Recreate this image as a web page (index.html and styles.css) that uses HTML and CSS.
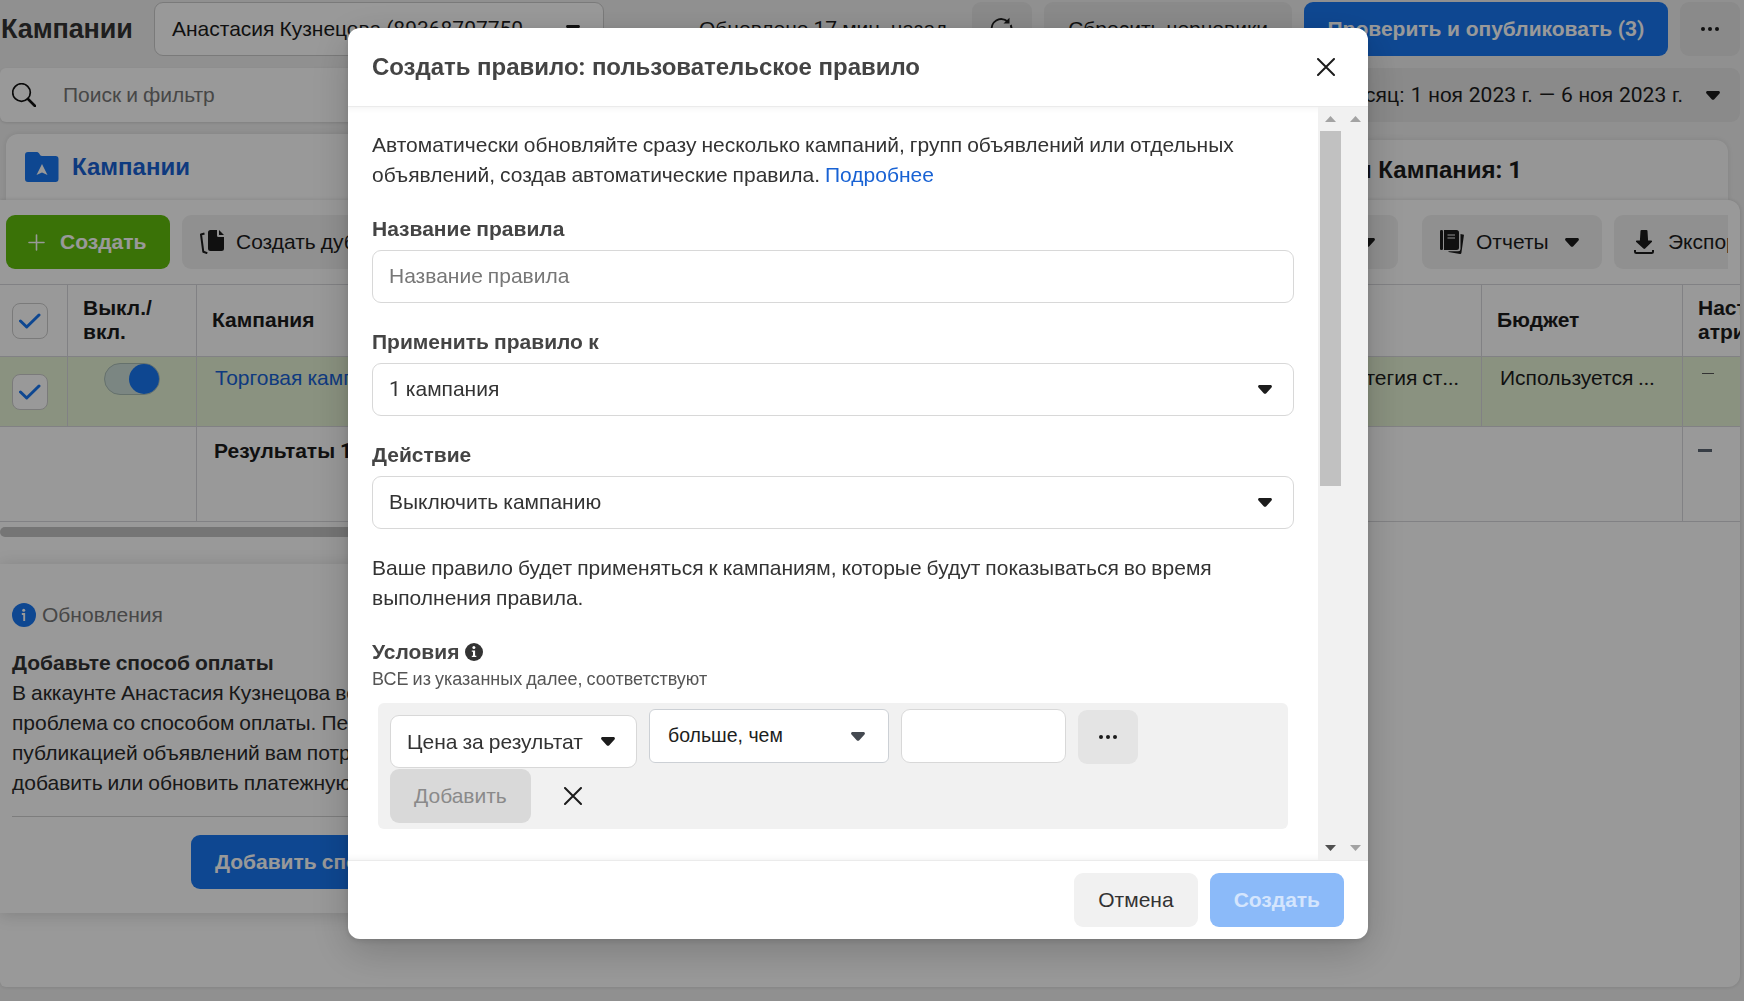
FILE: index.html
```
<!DOCTYPE html>
<html lang="ru">
<head>
<meta charset="utf-8">
<title>Кампании</title>
<link rel="stylesheet" href="styles.css">
</head>
<body>
<svg width="0" height="0" class="defs">
  <symbol id="caret" viewBox="0 0 14 9"><path d="M1.600 0h10.800c1.400 0 2 1.500 1.100 2.500L8.300 8.200c-.7.8-1.900.8-2.600 0L.5 2.500C-.4 1.500.2 0 1.600 0z"/></symbol>
  <symbol id="dots" viewBox="0 0 18 4"><circle cx="2" cy="2" r="2"/><circle cx="9" cy="2" r="2"/><circle cx="16" cy="2" r="2"/></symbol>
  <symbol id="cross" viewBox="0 0 18 18"><path d="M1 1l16 16M17 1L1 17" fill="none" stroke="currentColor" stroke-width="2" stroke-linecap="round"/></symbol>
  <symbol id="check" viewBox="0 0 22 16"><path d="M1.500 8l6.200 6L20 2" fill="none" stroke="#1877f2" stroke-width="3" stroke-linecap="round" stroke-linejoin="round"/></symbol>
</svg>

<div class="page">
  <header class="topbar">
    <h1 class="page-title">Кампании</h1>
    <div class="account"><span>Анастасия Кузнецова <span class="n">(89368707750</span></span><svg class="caret"><use href="#caret"/></svg></div>
    <span class="updated">Обновлено <span class="n">17</span> мин. назад</span>
    <button class="btn icon-btn"><svg class="line" width="24" height="24" viewBox="0 0 24 24" stroke="#1c1c1c" stroke-width="2"><path d="M2 14a9.500 9.500 0 0 1 15.500-9.500"/><path d="M20.800 8a9.500 9.500 0 1 1-18.500 8"/><path d="M19.500 .8v5.700h-6z" fill="#1c1c1c" stroke="none"/></svg></button>
    <button class="btn drafts">Сбросить черновики</button>
    <button class="btn primary publish">Проверить и опубликовать <span class="n">(3)</span></button>
    <button class="btn icon-btn"><svg width="18" height="4"><use href="#dots"/></svg></button>
  </header>

  <div class="search-row">
    <div class="search">
      <svg class="line" width="24" height="24" viewBox="0 0 24 24" stroke="#111"><circle cx="9.500" cy="9.500" r="8.800" stroke-width="1.700"/><path d="M16 16l7 7" stroke-width="2.600" stroke-linecap="round"/></svg>
      <span>Поиск и фильтр</span>
    </div>
    <div class="btn date"><span>Этот месяц: <span class="n">1</span> ноя <span class="n">2023</span> г. <span class="n">—</span> <span class="n">6</span> ноя <span class="n">2023</span> г.</span><svg class="caret"><use href="#caret"/></svg></div>
  </div>

  <div class="tabs">
    <div class="tab active">
      <svg width="34" height="30" viewBox="0 0 34 30"><path d="M0 3a3 3 0 0 1 3-3h9c2.500 0 2.500 4 5 4h13.500a3 3 0 0 1 3 3v20a3 3 0 0 1-3 3H3a3 3 0 0 1-3-3z" fill="#1877f2"/><path d="M17 12l5.500 11L17 20.500 11.500 23z" fill="#fff"/></svg>
      <span>Кампании</span>
    </div>
    <div class="tab ads">Объявления для Кампания<span class="n">: 1</span></div>
  </div>

  <main class="panel">
    <div class="toolbar">
      <button class="btn create"><svg width="17" height="17" viewBox="0 0 17 17"><path d="M8.500 1v15M1 8.500h15" stroke="#fff" stroke-width="1.600" stroke-linecap="round"/></svg>Создать</button>
      <button class="btn copy"><svg width="24" height="24" viewBox="0 0 24 24" fill="#1c1c1c"><path d="M10.500 0H17v5.500A1.500 1.500 0 0 0 18.500 7H24v11.500a2.500 2.500 0 0 1-2.500 2.500h-11A2.500 2.500 0 0 1 8 18.500v-16A2.500 2.500 0 0 1 10.500 0z"/><path d="M19 0l5 5h-5z"/><path d="M4.500 3.500L1 4.500l2.300 17.300 4 1.400" fill="none" stroke="#1c1c1c" stroke-width="2" stroke-linejoin="round"/></svg>Создать дубликат</button>
      <span class="spring"></span>
      <button class="btn rules">Правила<svg class="caret"><use href="#caret"/></svg></button>
      <button class="btn reports"><svg width="24" height="24" viewBox="0 0 24 24" fill="#1c1c1c"><rect width="3" height="20" rx="1.300"/><path d="M4 0h12.500A2.500 2.500 0 0 1 19 2.500v15a2.500 2.500 0 0 1-2.500 2.500H4z"/><path d="M7.500 5h7.500M7.500 8h7.500" stroke="#f0f0f0" stroke-width="1.200"/><path d="M20.500 4l3.500.7-2.600 18.200c-.1.700-.8 1.200-1.500 1.100L8.500 22v-.8h9.700a2.300 2.300 0 0 0 2.300-2.300z"/></svg>Отчеты<svg class="caret"><use href="#caret"/></svg></button>
      <button class="btn export"><svg width="20" height="24" viewBox="0 0 20 24"><path d="M7.500 0h5a1 1 0 0 1 1 1l.6 9.500h3.200a.8.8 0 0 1 .5 1.400l-6.600 6.600c-.6.600-1.200.6-1.800 0L2.200 11.900a.8.800 0 0 1 .5-1.400h3.200L6.500 1a1 1 0 0 1 1-1z" fill="#1c1c1c"/><path d="M1 20v1.500A1.500 1.500 0 0 0 2.500 23h15a1.500 1.500 0 0 0 1.500-1.500V20" fill="none" stroke="#1c1c1c" stroke-width="2"/></svg>Экспорт</button>
    </div>

    <div class="table">
      <div class="row head">
        <div class="cell pick"><span class="box"><svg width="22" height="16"><use href="#check"/></svg></span></div>
        <div class="cell">Выкл./<br>вкл.</div>
        <div class="cell">Кампания</div>
        <div class="cell"></div>
        <div class="cell">Бюджет</div>
        <div class="cell last"><span>Настройка<br>атрибуции</span></div>
      </div>
      <div class="row item">
        <div class="cell pick"><span class="box"><svg width="22" height="16"><use href="#check"/></svg></span></div>
        <div class="cell switch-cell"><span class="switch"></span></div>
        <div class="cell link">Торговая кампания</div>
        <div class="cell strategy">Стратегия ст<span class="n">...</span></div>
        <div class="cell">Используется <span class="n">...</span></div>
        <div class="cell last"><i class="dash thin"></i></div>
      </div>
      <div class="row total">
        <div class="cell blank"></div>
        <div class="cell results">Результаты <span class="n">1</span> кампании</div>
        <div class="cell last"><i class="dash"></i></div>
      </div>
    </div>
    <div class="hscroll"></div>

    <section class="updates">
      <div class="updates-head"><svg width="24" height="24" viewBox="0 0 24 24"><circle cx="12" cy="12" r="12" fill="#1877f2"/><circle cx="11.700" cy="7.200" r="1.500" fill="#fff"/><path d="M9.800 11h2.400v7" fill="none" stroke="#fff" stroke-width="1.900"/></svg>Обновления</div>
      <div class="updates-text">
        <b>Добавьте способ оплаты</b>
        <span>В аккаунте Анастасия Кузнецова возникла</span>
        <span>проблема со способом оплаты. Перед</span>
        <span>публикацией объявлений вам потребуется</span>
        <span>добавить или обновить платежную</span>
      </div>
      <div class="updates-foot"><button class="btn primary">Добавить способ оплаты</button></div>
    </section>
  </main>
</div>

<div class="overlay">
  <div class="modal">
    <header class="modal-head"><h2>Создать правило<span class="n">:</span> пользовательское правило</h2><svg width="18" height="18"><use href="#cross"/></svg></header>
    <div class="modal-body">
      <div class="form">
        <p>Автоматически обновляйте сразу несколько кампаний, групп объявлений или отдельных<br>объявлений, создав автоматические правила. <a>Подробнее</a></p>
        <label>Название правила</label>
        <div class="field placeholder">Название правила</div>
        <label>Применить правило к</label>
        <div class="field"><span><span class="n">1</span> кампания</span><svg class="caret"><use href="#caret"/></svg></div>
        <label>Действие</label>
        <div class="field"><span>Выключить кампанию</span><svg class="caret"><use href="#caret"/></svg></div>
        <p class="note">Ваше правило будет применяться к кампаниям, которые будут показываться во время<br>выполнения правила.</p>
        <div class="cond-title">Условия<svg width="18" height="18" viewBox="0 0 18 18"><circle cx="9" cy="9" r="9" fill="#333"/><circle cx="8.900" cy="4.600" r="1.500" fill="#fff"/><path d="M6.800 7.400h3.300v5.300h1.200v1.300H6.800v-1.300H8V8.700H6.800z" fill="#fff"/></svg></div>
        <div class="cond-sub">ВСЕ из указанных далее, соответствуют</div>
        <div class="conds">
          <div class="cond-row">
            <div class="field metric">Цена за результат<svg class="caret"><use href="#caret"/></svg></div>
            <div class="field operator">больше, чем<svg class="caret slate"><use href="#caret"/></svg></div>
            <div class="field amount"></div>
            <button class="btn icon-btn more"><svg width="18" height="4"><use href="#dots"/></svg></button>
          </div>
          <div class="cond-row actions"><button class="btn add">Добавить</button><svg width="18" height="18"><use href="#cross"/></svg></div>
        </div>
      </div>
      <div class="scrollbar inner">
        <svg width="11" height="6"><path d="M0 6l5.500-6L11 6z" fill="#a3a3a3"/></svg>
        <div class="thumb"></div>
        <svg width="11" height="6"><path d="M0 0l5.500 6L11 0z" fill="#505050"/></svg>
      </div>
      <div class="scrollbar">
        <svg width="11" height="6"><path d="M0 6l5.500-6L11 6z" fill="#a3a3a3"/></svg>
        <svg width="11" height="6"><path d="M0 0l5.500 6L11 0z" fill="#a3a3a3"/></svg>
      </div>
    </div>
    <footer class="modal-foot"><button class="btn">Отмена</button><button class="btn submit">Создать</button></footer>
  </div>
</div>
</body>
</html>
```
FILE: styles.css
```
* { box-sizing: border-box; }
body {
  margin: 0;
  height: 1001px;
  overflow: hidden;
  font: 21px/30px "Liberation Sans", Arial, sans-serif;
  word-spacing: -0.04em;
  color: #1c1c1c;
  background: #f1f1f1;
  white-space: nowrap;
}
h1, h2, p { margin: 0; }
svg { flex: none; display: block; fill: #1c1c1c; }
.line { fill: none; }
.defs { position: absolute; }
/* digits and punctuation are set in Roboto */
.n { font-family: Roboto, sans-serif; }
.caret { width: 14px; height: 9px; }
.slate { fill: #444950; }

.btn {
  height: 54px;
  display: flex;
  align-items: center;
  flex: none;
  padding: 0 24px;
  border: 0;
  border-radius: 9px;
  background: #f1f1f1;
  color: #1c1c1c;
  font: inherit;
  word-spacing: inherit;
  white-space: pre;
}
.primary { background: #1877f2; color: #fff; font-weight: 700; }
.icon-btn { width: 60px; padding: 0; justify-content: center; }

.page { height: 1001px; overflow: hidden; display: flex; flex-direction: column; }
.topbar { display: flex; align-items: center; gap: 12px; padding: 2px 4px 0 1px; height: 56px; flex: none; }
.topbar .btn:not(.primary), .date { background: #e6e6e6; }
.page-title { width: 141px; font-size: 27px; font-weight: 700; letter-spacing: -0.1px; color: #333; }
.account {
  width: 450px; height: 54px; padding: 0 23px 0 17px;
  display: flex; align-items: center; justify-content: space-between;
  border: 1px solid #ccc; border-radius: 9px; background: #fff;
}
.updated { width: 261px; margin-left: auto; padding-right: 12px; }
.drafts { width: 248px; justify-content: center; }
.publish { width: 364px; justify-content: center; word-spacing: -0.01em; }

.search-row { display: flex; height: 54px; margin: 12px 4px 0 0; flex: none; }
.search {
  flex: 1; display: flex; align-items: center; gap: 27px; padding-left: 12px;
  background: #fff; border-radius: 6px; color: #777;
  box-shadow: 0 1px 3px rgba(0,0,0,.12);
}
.date { width: 560px; margin-left: 12px; padding: 0 20px; justify-content: flex-end; gap: 23px; word-spacing: 0; }

.tabs { display: flex; height: 66px; margin: 12px 16px 0 6px; align-items: flex-end; gap: 10px; flex: none; font-size: 24px; font-weight: 700; }
.tab { background: #fff; border-radius: 12px 12px 0 0; display: flex; align-items: center; box-shadow: 0 0 6px rgba(0,0,0,.1); }
.tab.active { width: 570px; height: 66px; padding-left: 19px; gap: 13px; color: #1862d4; }
.tab.ads { flex: 1; height: 60px; justify-content: flex-end; padding-right: 206px; white-space: pre; word-spacing: 0; background: #fafafa; }

.panel {
  position: relative; height: 787px; margin-right: 4px; flex: none;
  background: #fff; border-radius: 0 12px 12px 6px;
  box-shadow: 0 0 4px rgba(0,0,0,.14);
}
.toolbar { display: flex; gap: 12px; margin-right: 12px; padding: 15px 0 15px 6px; overflow: hidden; }
.create { width: 164px; padding: 0 0 0 22px; gap: 15px; background: #61bf0d; color: #fff; font-weight: 700; }
.copy { padding: 0 18px; gap: 12px; }
.spring { flex: 1; }
.rules { padding: 0 23px; gap: 14px; margin-right: 12px; }
.reports { width: 180px; padding: 0 0 0 18px; gap: 12px; }
.reports .caret { margin-left: 4px; }
.export { width: 114px; padding: 0 0 0 20px; gap: 14px; border-radius: 9px 0 0 9px; overflow: hidden; }

.table { border-top: 1px solid #d8d8dc; overflow: hidden; }
.row { display: grid; grid-template-columns: 68px 129px 700px 1fr 201px 57px; border-bottom: 1px solid #d8d8dc; }
.cell { border-right: 1px solid #d8d8dc; padding: 0 15px; }
.cell.last { border-right: 0; overflow: hidden; }
.cell.pick { padding: 0 0 0 12px; display: flex; align-items: center; }
.box { width: 36px; height: 36px; border: 1px solid #ccc; border-radius: 8px; background: #fff; display: flex; align-items: center; justify-content: center; }
.head { height: 72px; font-weight: 700; line-height: 24px; }
.head .cell:not(.pick) { display: flex; align-items: center; padding-bottom: 1px; }
.item { height: 70px; background: #e6f3d5; }
.item .cell:not(.pick) { padding: 6px 19px 0 18px; }
.item .switch-cell { display: flex; justify-content: flex-start; }
.item .cell.switch-cell { padding: 6px 0 0 36px; }
.item .link { color: #1862d4; }
.item .cell.strategy { text-align: right; padding-right: 22px; }
.switch { width: 56px; height: 32px; border: 1px solid #a9bdb5; border-radius: 16px; background: #cddfd9; display: flex; justify-content: flex-end; }
.switch::after { content: ""; width: 30px; height: 30px; border-radius: 50%; background: #1877f2; }
.dash { display: block; width: 14px; height: 3px; margin-top: 22px; background: #5d6673; }
.dash.thin { width: 12px; height: 1px; margin: 10px 0 0 1px; background: #555; }
.total { height: 95px; grid-template-columns: 197px 1fr 57px; }
.cell.results { padding: 9px 17px; font-weight: 700; }
.hscroll { width: 900px; height: 10px; margin-top: 5px; border-radius: 5px; background: #c3c3c3; }

.updates { width: 560px; height: 349px; margin-top: 27px; padding: 36px 0 0 12px; background: #fff; box-shadow: 0 2px 16px rgba(0,0,0,.16); clip-path: inset(-20px -20px -30px 0); }
.updates-head { display: flex; align-items: center; gap: 6px; color: #777; }
.updates-text { display: flex; flex-direction: column; margin-top: 18px; color: #2b2b2b; }
.updates-text b { color: #333; }
.updates-foot { border-top: 1px solid #d0d0d0; margin-top: 18px; padding: 18px 0 0 179px; display: flex; }

.overlay { position: fixed; inset: 0; padding: 28px 0 0 348px; background: rgba(0,0,0,.4); }
.modal {
  width: 1020px; height: 911px; display: flex; flex-direction: column;
  background: #fff; border-radius: 12px; overflow: hidden;
  box-shadow: 0 12px 42px rgba(0,0,0,.2), 0 2px 6px rgba(0,0,0,.12);
}
.modal-head { height: 78px; flex: none; display: flex; align-items: center; justify-content: space-between; padding: 0 33px 0 24px; color: #1c1c1c; }
.modal-head h2 { font-size: 24px; font-weight: 700; word-spacing: 0; letter-spacing: -0.03px; color: #444; }
.modal-body { height: 755px; flex: none; display: flex; border: solid #ebebeb; border-width: 1px 0; box-shadow: inset 0 6px 6px -5px rgba(0,0,0,.06), inset 0 -6px 6px -5px rgba(0,0,0,.06); }
.form { width: 970px; padding: 23px 24px 0; color: #333; }
.form a { color: #1862d4; }
.form label { display: block; height: 30px; margin-top: 24px; font-weight: 700; word-spacing: -0.03em; color: #444; }
.field {
  height: 53px; margin-top: 6px; padding: 0 21px 0 16px;
  display: flex; align-items: center; justify-content: space-between;
  border: 1px solid #d8d8d8; border-radius: 9px; background: #fff;
}
.field > span { padding-bottom: 1px; }
.form .placeholder { padding-bottom: 1px; }
.placeholder { color: #777; }
.note { margin-top: 24px; }
.cond-title { display: flex; align-items: center; gap: 6px; height: 30px; margin-top: 24px; font-weight: 700; color: #444; }
.cond-sub { font-size: 18px; line-height: 24px; color: #555; }
.conds { height: 126px; margin: 12px 6px 0; padding: 6px 12px; border-radius: 6px; background: #f1f1f1; }
.cond-row { display: flex; gap: 12px; height: 60px; align-items: flex-start; }
.cond-row .field { margin-top: 0; height: 54px; }
.cond-row .metric { width: 247px; height: 53px; margin-top: 6px; }
.operator { width: 240px; padding: 0 23px 2px 18px; border-color: #ccd0d5; border-radius: 6px; font-size: 19.5px; color: #1c1e21; word-spacing: 0; }
.operator .caret { margin-top: 2px; }
.amount { width: 165px; }
.more { margin-top: 1px; background: #e4e4e4; }
.actions { gap: 33px; height: 54px; align-items: center; color: #1c1c1c; }
.add { width: 141px; background: #d9d9d9; color: #8a8a8a; }
.scrollbar { width: 25px; display: flex; flex-direction: column; align-items: center; padding: 9px 0; justify-content: space-between; background: #f1f1f1; }
.thumb { width: 21px; height: 355px; margin: 9px 0 auto; background: #c1c1c1; }
.modal-foot { flex: 1; display: flex; gap: 12px; justify-content: flex-end; padding: 12px 24px 0 0; }
.modal-foot .btn { color: #333; }
.modal-foot .btn.submit { background: #8bbaf9; color: #d4e5fd; font-weight: 700; }
```
